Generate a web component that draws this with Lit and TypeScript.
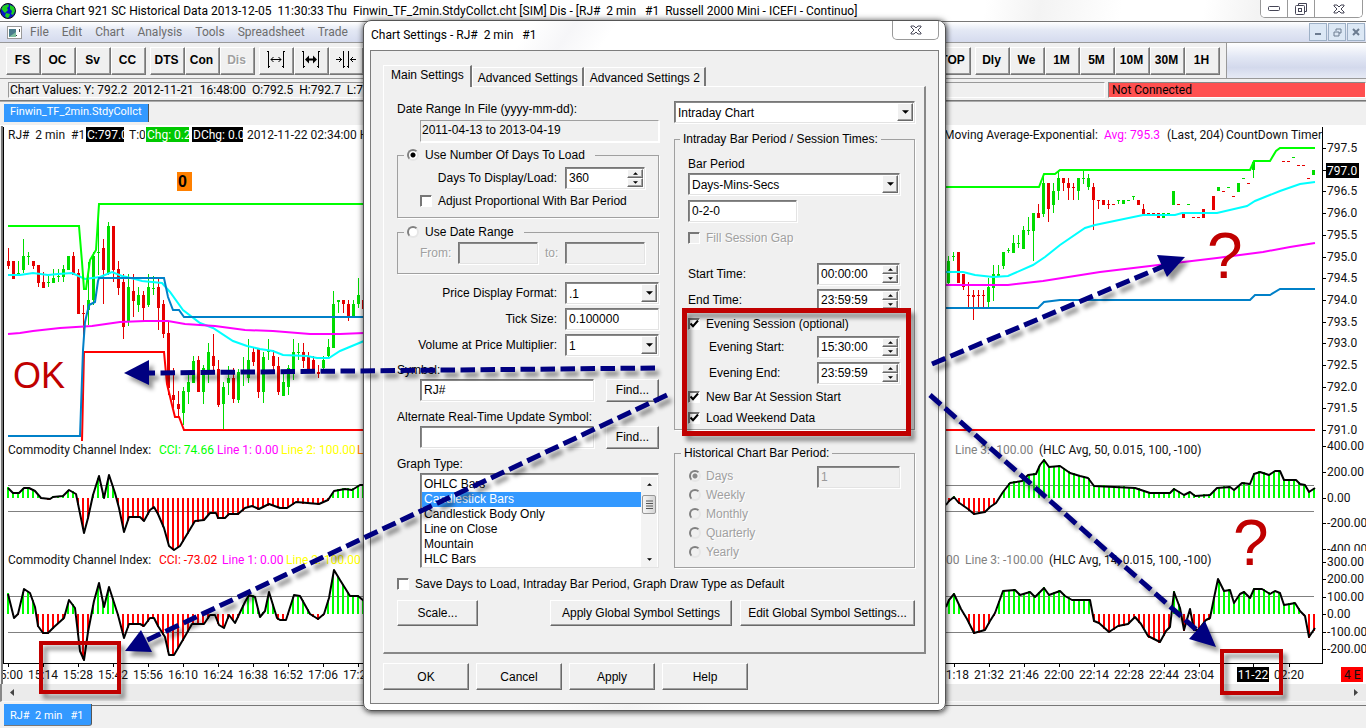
import { LitElement, html, svg, css, nothing } from "lit";
import { customElement, property } from "lit/decorators.js";
import { classMap } from "lit/directives/class-map.js";

type Point = [number, number];
// x, high, low, body top, body bottom, colour code
type Candle = [number, number, number, number, number, "g" | "r"];

const leftCandles: Candle[] = [
  [8, 248, 269, 261, 266, "r"], [13, 261, 279, 261, 279, "r"], [18, 261, 275, 273, 275, "g"],
  [23, 239, 273, 256, 270, "g"], [28, 252, 265, 256, 257, "g"], [33, 261, 269, 261, 266, "r"],
  [38, 265, 287, 265, 283, "r"], [43, 272, 288, 282, 288, "r"], [48, 276, 287, 282, 283, "g"],
  [53, 269, 283, 278, 283, "g"], [58, 269, 282, 276, 277, "g"], [63, 265, 282, 269, 277, "g"],
  [68, 256, 270, 256, 270, "g"], [73, 252, 275, 256, 275, "r"], [78, 269, 314, 273, 314, "r"],
  [83, 305, 400, 313, 314, "r"], [88, 262, 325, 300, 310, "g"], [93, 252, 305, 256, 300, "g"],
  [98, 204, 275, 252, 253, "g"], [103, 239, 304, 248, 270, "r"], [108, 222, 275, 226, 273, "g"],
  [113, 226, 282, 226, 270, "r"], [118, 261, 295, 269, 288, "r"], [123, 274, 339, 282, 327, "r"],
  [128, 274, 326, 287, 322, "g"], [133, 274, 317, 291, 301, "r"], [138, 287, 312, 295, 305, "g"],
  [143, 291, 321, 295, 308, "r"], [148, 274, 307, 287, 305, "g"], [153, 276, 295, 288, 289, "g"],
  [158, 278, 330, 287, 308, "r"], [163, 300, 338, 304, 334, "r"], [168, 322, 395, 333, 388, "r"],
  [173, 368, 408, 395, 400, "r"], [178, 391, 416, 404, 409, "r"], [183, 387, 425, 391, 413, "g"],
  [188, 373, 404, 382, 392, "g"], [193, 356, 383, 361, 383, "g"], [198, 356, 392, 360, 392, "r"],
  [203, 365, 404, 368, 392, "g"], [208, 343, 383, 352, 374, "g"], [213, 334, 373, 356, 366, "r"],
  [218, 360, 407, 369, 405, "r"], [223, 382, 429, 387, 404, "g"], [228, 366, 395, 378, 383, "g"],
  [233, 368, 403, 378, 399, "r"], [238, 369, 403, 372, 400, "g"], [243, 357, 386, 370, 374, "g"],
  [248, 339, 383, 360, 378, "g"], [253, 347, 366, 352, 362, "r"], [258, 348, 398, 349, 392, "r"],
  [263, 352, 403, 357, 392, "g"], [268, 339, 360, 351, 352, "g"], [273, 350, 370, 356, 366, "r"],
  [278, 357, 395, 366, 392, "r"], [283, 373, 396, 382, 396, "g"], [288, 365, 395, 368, 387, "g"],
  [293, 339, 380, 352, 373, "g"], [298, 343, 360, 352, 353, "g"], [303, 343, 368, 352, 361, "r"],
  [308, 352, 371, 356, 370, "r"], [313, 356, 373, 360, 370, "r"], [318, 365, 378, 372, 374, "r"],
  [323, 356, 373, 360, 368, "g"], [328, 339, 357, 347, 356, "g"], [333, 291, 348, 304, 348, "g"],
  [338, 300, 313, 300, 302, "g"], [343, 300, 313, 300, 304, "r"], [348, 300, 321, 304, 317, "r"],
  [353, 300, 317, 304, 316, "g"], [358, 278, 308, 295, 304, "g"], [363, 300, 309, 300, 309, "r"],
];

const rightCandles: Candle[] = [
  [948, 256, 284, 261, 283, "g"], [953, 252, 261, 256, 257, "g"], [958, 252, 283, 252, 283, "r"],
  [963, 274, 290, 274, 287, "r"], [968, 282, 308, 295, 296, "r"], [973, 290, 320, 295, 297, "r"],
  [978, 290, 308, 295, 296, "r"], [983, 290, 307, 295, 296, "r"], [988, 278, 307, 287, 302, "g"],
  [993, 265, 301, 274, 288, "g"], [998, 265, 277, 274, 276, "g"], [1003, 252, 269, 252, 266, "g"],
  [1008, 248, 253, 250, 251, "g"], [1013, 235, 253, 243, 253, "g"], [1018, 235, 248, 243, 244, "g"],
  [1023, 226, 249, 230, 249, "g"], [1028, 217, 235, 230, 231, "g"], [1033, 213, 261, 213, 231, "g"],
  [1038, 204, 218, 213, 218, "r"], [1043, 174, 217, 183, 214, "g"], [1048, 183, 222, 183, 209, "r"],
  [1053, 183, 213, 191, 205, "g"], [1058, 170, 200, 178, 191, "g"], [1063, 178, 191, 178, 183, "r"],
  [1068, 178, 200, 183, 188, "r"], [1073, 183, 200, 187, 188, "r"], [1078, 178, 200, 178, 191, "g"],
  [1083, 170, 184, 178, 179, "g"], [1088, 174, 190, 178, 187, "g"], [1093, 183, 230, 187, 200, "r"],
  [1098, 200, 209, 200, 201, "r"], [1103, 200, 205, 200, 205, "r"], [1108, 200, 209, 204, 205, "r"],
  [1113, 204, 205, 204, 205, "r"], [1118, 200, 204, 200, 201, "g"], [1123, 200, 204, 200, 204, "g"],
  [1128, 200, 201, 200, 201, "g"], [1133, 196, 200, 196, 197, "g"], [1138, 200, 205, 200, 205, "r"],
  [1143, 204, 214, 209, 214, "r"], [1148, 213, 214, 213, 214, "r"], [1153, 213, 214, 213, 214, "r"],
  [1158, 213, 218, 213, 218, "r"], [1163, 213, 218, 213, 218, "g"], [1168, 213, 214, 213, 214, "g"],
  [1173, 191, 205, 191, 205, "g"], [1178, 204, 205, 204, 205, "r"], [1183, 213, 218, 213, 218, "r"],
  [1188, 204, 205, 204, 205, "g"], [1193, 217, 218, 217, 218, "r"], [1198, 217, 218, 217, 218, "r"],
  [1203, 209, 218, 209, 218, "r"], [1213, 196, 210, 196, 210, "r"], [1218, 187, 191, 187, 191, "g"],
  [1223, 191, 192, 191, 192, "r"], [1228, 187, 188, 187, 188, "g"], [1233, 196, 197, 196, 197, "r"],
  [1238, 183, 192, 183, 192, "g"], [1243, 178, 179, 178, 179, "g"], [1248, 183, 184, 183, 184, "r"],
  [1253, 161, 178, 162, 170, "g"], [1283, 161, 162, 161, 162, "r"], [1288, 161, 162, 161, 162, "r"],
  [1293, 157, 158, 157, 158, "g"], [1298, 165, 166, 165, 166, "r"], [1303, 165, 166, 165, 166, "r"],
  [1308, 178, 179, 178, 179, "r"], [1313, 170, 175, 170, 175, "g"],
];

const studyLines: { color: string; points: string }[] = [
  { color: "#00ffff", points: "8,275 20,275 33,273 48,275 58,274 72,273 85,279 100,277 112,272 122,276 135,279 142,281 162,283 170,292 183,310 200,323 213,328 233,341 247,346 260,349 273,351 283,355 307,356 317,358 329,358 340,351 364,341" },
  { color: "#00ffff", points: "945,272 963,272 975,275 993,277 1008,276 1033,265 1045,257 1060,245 1085,228 1095,225 1143,215 1175,215 1182,213 1217,213 1247,206 1255,201 1280,191 1300,184 1315,182" },
  { color: "#ff00ff", points: "8,334 20,333 33,331 60,328 92,326 120,322 145,321 168,321 185,324 215,326 245,330 273,331 310,334 340,334 364,333" },
  { color: "#ff00ff", points: "945,285 1008,285 1043,281 1100,272 1150,266 1217,258 1240,255 1263,252 1290,247 1315,243" },
  { color: "#00ff00", points: "8,226 79,226 82,262 84,289 86,289 90,260 96,250 99,204 364,204" },
  { color: "#00ff00", points: "945,187 1039,187 1044,174 1055,174 1060,170 1250,170 1254,161 1270,161 1276,151 1280,148 1315,148" },
  { color: "#ff0000", points: "82,441 84,352 164,352 167,384 172,405 175,417 179,417 184,430 364,430" },
  { color: "#ff0000", points: "945,430 1315,430" },
  { color: "#0080c8", points: "8,436 80,436 83,350 85,322 89,305 95,302 98,281 99,278 164,278 168,297 173,310 179,310 184,317 364,317" },
  { color: "#0080c8", points: "945,308 1038,308 1044,302 1060,300 1250,300 1255,295 1270,295 1280,289 1315,289" },
];

const cciSlow: Point[][] = [
  [[8, 488], [13, 493], [19, 493], [24, 488], [29, 488], [35, 491], [41, 498], [50, 499], [53, 497], [63, 496], [69, 490], [76, 494], [84, 533], [88, 518], [93, 495], [99, 476], [104, 498], [109, 475], [115, 493], [119, 508], [124, 532], [129, 517], [140, 517], [144, 521], [150, 510], [154, 507], [158, 514], [164, 528], [169, 546], [174, 550], [180, 546], [186, 536], [195, 521], [204, 520], [210, 513], [216, 513], [218, 518], [225, 518], [229, 514], [238, 514], [245, 508], [252, 506], [259, 509], [269, 504], [280, 508], [287, 508], [296, 502], [319, 504], [328, 500], [334, 491], [345, 489], [352, 490], [360, 485], [364, 485]],
  [[946, 505], [949, 501], [954, 497], [958, 502], [968, 509], [974, 514], [985, 512], [990, 507], [996, 503], [1003, 492], [1010, 483], [1022, 481], [1028, 475], [1036, 474], [1040, 465], [1044, 460], [1049, 467], [1060, 466], [1070, 473], [1080, 476], [1088, 478], [1094, 486], [1135, 488], [1150, 493], [1170, 493], [1174, 489], [1184, 495], [1190, 492], [1195, 496], [1210, 495], [1217, 488], [1230, 487], [1234, 490], [1242, 483], [1250, 484], [1254, 474], [1260, 472], [1269, 475], [1275, 471], [1280, 471], [1284, 480], [1296, 480], [1300, 484], [1305, 485], [1309, 492], [1315, 488]],
];

const cciFast: Point[][] = [
  [[8, 594], [14, 618], [18, 614], [24, 589], [30, 593], [35, 607], [38, 626], [43, 633], [48, 633], [54, 627], [64, 618], [69, 600], [75, 608], [80, 651], [84, 660], [88, 632], [94, 601], [99, 583], [104, 607], [109, 587], [118, 615], [124, 638], [129, 624], [140, 624], [144, 626], [150, 618], [154, 618], [158, 626], [165, 637], [169, 655], [174, 655], [184, 638], [192, 624], [204, 624], [210, 615], [215, 615], [219, 625], [224, 628], [229, 615], [235, 623], [245, 602], [249, 595], [255, 597], [260, 617], [265, 611], [269, 592], [277, 618], [280, 620], [286, 620], [294, 595], [300, 596], [310, 614], [318, 619], [324, 614], [329, 598], [334, 570], [340, 580], [350, 596], [358, 596], [364, 601]],
  [[946, 607], [949, 600], [954, 594], [961, 609], [967, 619], [974, 633], [985, 630], [990, 621], [995, 613], [1003, 591], [1015, 590], [1020, 595], [1030, 592], [1035, 597], [1040, 592], [1044, 588], [1049, 595], [1060, 591], [1065, 596], [1072, 600], [1090, 600], [1094, 621], [1099, 623], [1109, 632], [1118, 626], [1128, 624], [1135, 617], [1141, 624], [1148, 636], [1160, 642], [1166, 631], [1170, 627], [1174, 592], [1180, 608], [1184, 630], [1190, 609], [1194, 630], [1198, 630], [1206, 620], [1210, 618], [1214, 598], [1218, 579], [1224, 591], [1230, 590], [1234, 603], [1240, 594], [1244, 592], [1250, 598], [1254, 589], [1262, 589], [1270, 594], [1275, 591], [1280, 593], [1284, 605], [1290, 604], [1295, 603], [1300, 611], [1305, 616], [1309, 637], [1315, 628]],
];

const priceLabels = Array.from({ length: 14 }, (_, i) => ({
  y: Math.round(148 + i * 21.7),
  text: (797.5 - i * 0.5).toFixed(1),
}));

const cciLabels = [
  { y: 446, text: "400.00" }, { y: 472, text: "200.00" }, { y: 498, text: "0.00" },
  { y: 523, text: "-200.00" }, { y: 549, text: "-400.00" }, { y: 562, text: "300.00" },
  { y: 579, text: "200.00" }, { y: 597, text: "100.00" }, { y: 614, text: "0.00" },
  { y: 632, text: "-100.00" }, { y: 649, text: "-200.00" },
];

const timeLabels = [
  ...["15:00", "15:14", "15:28", "15:42", "15:56", "16:10", "16:24", "16:38", "16:52", "17:06", "17:20"].map(
    (text, i) => ({ x: 8 + i * 35, text })
  ),
  ...["21:18", "21:32", "21:46", "22:00", "22:14", "22:28", "22:44", "23:04"].map((text, i) => ({
    x: 954 + i * 35,
    text,
  })),
  { x: 1289, text: "02:20" },
];

function valueAt(points: Point[], x: number): number {
  for (let i = 1; i < points.length; i++) {
    const [x0, y0] = points[i - 1];
    const [x1, y1] = points[i];
    if (x <= x1) return y0 + ((y1 - y0) * (x - x0)) / (x1 - x0);
  }
  return points[points.length - 1][1];
}

@customElement("price-chart")
export class PriceChart extends LitElement {
  static styles = css`
    :host { display: block; background: #fff; }
    .canvas { display: block; width: 100%; height: auto; }
    .label { font: 12px Roboto, "Noto Sans", sans-serif; fill: #111; white-space: pre; }
    .inverse { fill: #fff; }
    .middle { text-anchor: middle; }
    .marker { font: bold 16px "Liberation Sans", Arial, sans-serif; fill: #000; }
    .crisp { shape-rendering: crispEdges; }
  `;

  private text(x: number, y: number, text: string, fill = "#111") {
    return svg`<text class="label" x=${x} y=${y} style=${`fill:${fill}`}>${text}</text>`;
  }

  private clipped(x: number, width: number, text: string, background: string, fill: string) {
    return svg`<svg x=${x} y="127" width=${width} height="15" overflow="hidden">
      <rect width=${width} height="15" fill=${background}></rect>
      <text class="label" x="1" y="12" style=${`fill:${fill}`}>${text}</text>
    </svg>`;
  }

  private candles(items: Candle[]) {
    return items.map(([x, high, low, top, bottom, kind]) => {
      const fill = kind === "g" ? "#00dc00" : "#e60000";
      return svg`<rect x=${x} y=${high} width="1" height=${low - high} fill=${fill}></rect>
        <rect x=${x - 1} y=${top} width="3" height=${bottom - top} fill=${fill}></rect>`;
    });
  }

  private histogram(points: Point[], zero: number) {
    const bars = [];
    const first = points[0][0];
    const start = first < 100 ? 8 : 949;
    for (let x = start; x <= points[points.length - 1][0]; x += 5) {
      const y = Math.round(valueAt(points, x));
      const up = y < zero;
      bars.push(svg`<rect x=${x - 1} y=${up ? y - 1 : zero} width="2"
        height=${Math.abs(zero - y) + 1} fill=${up ? "#00ff00" : "#ff0000"}></rect>`);
    }
    return svg`<g class="crisp">${bars}</g>
      <polyline points=${points.map((p) => p.join()).join(" ")} fill="none" stroke="#000"
        stroke-width="2" stroke-linejoin="round"></polyline>`;
  }

  render() {
    return html`<svg class="canvas" viewBox="0 126 1366 558" role="img" aria-label="Russell 2000 Mini chart">
      <g class="crisp">
        <rect x="0" y="126" width="1" height="558" fill="#f0f0f0"></rect>
        <rect x="1" y="126" width="2" height="558" fill="#777"></rect>
        <rect x="3" y="127" width="1" height="537" fill="#000"></rect>
        <rect x="1322" y="127" width="1" height="537" fill="#000"></rect>
        <rect x="3" y="663" width="1320" height="1" fill="#000"></rect>
        ${[485, 511, 596, 632].map((y) => svg`<rect x="8" y=${y} width="1306" height="1" fill="#808080"></rect>`)}
        ${[...priceLabels, ...cciLabels].map((l) => svg`<rect x="1323" y=${l.y} width="3" height="1" fill="#000"></rect>`)}
        ${[...timeLabels, { x: 1253 }].map((l) => svg`<rect x=${l.x} y="664" width="1" height="3" fill="#000"></rect>`)}
        ${this.candles(leftCandles)} ${this.candles(rightCandles)}
      </g>
      ${studyLines.map((l) => svg`<polyline points=${l.points} fill="none" stroke=${l.color} stroke-width="2"></polyline>`)}
      ${cciSlow.map((p) => this.histogram(p, 498))} ${cciFast.map((p) => this.histogram(p, 614))}

      ${this.text(8, 139, "RJ#  2 min  #1")}
      ${this.clipped(86, 38, "C:797.0", "#000", "#fff")}
      ${this.clipped(128, 17, "T:0", "#fff", "#111")}
      ${this.clipped(146, 43, "Chg: 0.2", "#00c800", "#fff")}
      ${this.clipped(192, 51, "DChg: 0.0", "#000", "#fff")}
      ${this.text(247, 139, "2012-11-22 02:34:00 H:")}
      ${this.text(944, 139, "Moving Average-Exponential:")}
      ${this.text(1104, 139, "Avg: 795.3", "#ff00ff")}
      ${this.text(1167, 139, "(Last, 204)")}
      ${this.clipped(1225, 97, "CountDown Timer", "#fff", "#111")}
      <rect x="177" y="172" width="15" height="19" fill="#ff8000"></rect>
      <text class="marker" x="178" y="187">0</text>

      ${this.text(8, 454, "Commodity Channel Index:")}
      ${this.text(159, 454, "CCI: 74.66", "#00ff00")}
      ${this.text(217, 454, "Line 1: 0.00", "#ff00ff")}
      ${this.text(281, 454, "Line 2: 100.00", "#ffff00")}
      ${this.text(357, 454, "L", "#ff8000")}
      ${this.text(955, 454, "Line 3: -100.00", "#808080")}
      ${this.text(1039, 454, "(HLC Avg, 50, 0.015, 100, -100)")}
      ${this.text(8, 564, "Commodity Channel Index:")}
      ${this.text(159, 564, "CCI: -73.02", "#ff0000")}
      ${this.text(222, 564, "Line 1: 0.00", "#ff00ff")}
      ${this.text(286, 564, "Line 2: 100.00", "#ffff00")}
      ${this.text(946, 564, "00", "#808080")}
      ${this.text(965, 564, "Line 3: -100.00", "#808080")}
      ${this.text(1049, 564, "(HLC Avg, 14, 0.015, 100, -100)")}

      ${[...priceLabels, ...cciLabels].map((l) =>
        l.text === "797.0"
          ? svg`<rect x="1326" y=${l.y - 7} width="33" height="15" fill="#000"></rect>
              <text class="label inverse" x="1327" y=${l.y + 5}>${l.text}</text>`
          : l.text === "-400.00"
            ? svg`<svg x="1327" y="541" width="39" height="10" overflow="hidden"><text class="label" x="0" y="12">${l.text}</text></svg>`
            : svg`<text class="label" x="1327" y=${l.y + 4}>${l.text}</text>`
      )}
      ${timeLabels.map((l) => svg`<text class="label middle" x=${l.x} y="679">${l.text}</text>`)}
      <rect x="0" y="668" width="1" height="16" fill="#f0f0f0"></rect>
      <rect x="1" y="668" width="2" height="16" fill="#777"></rect>
      <rect x="1237" y="667" width="32" height="15" fill="#000"></rect>
      <text class="label inverse middle" x="1253" y="679">11-22</text>
      <rect x="1341" y="667" width="22" height="15" fill="#ff0000"></rect>
      <text class="label" x="1344" y="679">4 E</text>
    </svg>`;
  }
}

@customElement("chart-settings")
export class ChartSettings extends LitElement {
  static styles = css`
    :host {
      display: block;
      box-sizing: border-box;
      font: 12px/16px "Liberation Sans", Arial, sans-serif;
      color: #000;
      border: 1px solid #555;
      border-radius: 8px;
      background: linear-gradient(125deg, #fff 0 16%, #f6f6f8 20%, #fff 24% 60%, #f4f4f4 70%, #fff 78%);
      box-shadow: 0 0 6px rgba(0, 0, 0, 0.55), 1px 2px 5px rgba(0, 0, 0, 0.4);
      padding: 0 6px 6px;
    }
    * { box-sizing: border-box; }
    button, input, select { font: inherit; color: inherit; margin: 0; border-radius: 0; }
    .titlebar { display: flex; justify-content: space-between; height: 29px; }
    .title { font: 12px/16px Roboto, "Noto Sans", sans-serif; margin: 0; padding: 6px 0 0 1px; white-space: pre; }
    .close {
      width: 47px; height: 19px; padding: 0; display: grid; place-items: center;
      border: 1px solid #999; border-top: 0; border-radius: 0 0 5px 5px; background: #fff;
    }
    .client { border: 1px solid #7d7d7d; background: #f0f0f0; padding: 14px 12px 13px; }
    .tabs { display: flex; align-items: flex-end; height: 21px; }
    .tab {
      height: 19px; padding: 1px 4px 0 5px; border: 1px solid #fff; border-bottom: 0;
      border-right: 2px solid #777; background: #f0f0f0; white-space: nowrap;
    }
    .tab.active { height: 22px; padding: 0 6px 3px 7px; position: relative; z-index: 1; margin-bottom: -1px; }
    .panel {
      border: 1px solid #fff; border-right: 2px solid #888; border-bottom: 2px solid #888;
      padding: 11px 9px 26px 13px; display: flex; flex-direction: column;
    }
    .columns { display: flex; justify-content: space-between; }
    .left { width: 262px; display: flex; flex-direction: column; }
    .right { width: 241px; display: flex; flex-direction: column; padding-top: 3px; }
    .caption { height: 16px; display: block; white-space: nowrap; }
    .first { height: 22px; padding-top: 3px; }
    .indent { margin-left: 23px; }
    .row { display: flex; align-items: center; height: 22px; }
    .end { justify-content: flex-end; gap: 8px; }
    .between { justify-content: space-between; }
    .group { border: 1px solid #a0a0a0; box-shadow: 1px 1px 0 #fff; margin: 0; padding: 0; min-width: 0; }
    .group > legend { height: 16px; margin-left: -8px; padding: 0 3px; white-space: nowrap; }
    .choice-legend { display: flex; gap: 6px; align-items: center; }
    .group > .choice-legend { margin-left: -16px; padding-right: 10px; }
    .load { margin-top: 5px; padding: 4px 13px 8px 22px; }
    .load .check { margin-top: 4px; }
    .range { margin-top: 6px; padding: 2px 13px 9px 22px; }
    .range .row { justify-content: space-between; }
    .formats { display: flex; flex-direction: column; gap: 4px; margin: 8px 0 6px; }
    .block { display: flex; flex-direction: column; gap: 1px; margin-bottom: 8px; }
    .block.last { margin-bottom: 0; }
    .muted { color: #a0a0a0; text-shadow: 1px 1px 0 #fff; }
    .field {
      height: 22px; width: 100%; padding: 0 3px; background: #fff;
      border: 1px solid; border-color: #777 #e3e3e3 #e3e3e3 #777;
      box-shadow: inset 1px 1px 0 #888, 1px 1px 0 #fff; outline: 0;
    }
    .field.flat { background: #f0f0f0; box-shadow: 1px 1px 0 #fff; border-color: #a0a0a0 #fff #fff #a0a0a0; padding: 0 1px 3px; }
    .field:disabled { background: #f0f0f0; color: #999; opacity: 1; }
    .w80 { width: 80px; }
    .w94 { width: 94px; }
    .w83 { width: 83px; }
    .w109 { width: 109px; }
    .w174 { width: 174px; }
    .raised {
      background: #f0f0f0; border: 1px solid; border-color: #fff #696969 #696969 #fff;
      box-shadow: inset -1px -1px 0 #a0a0a0; padding: 0; white-space: nowrap;
    }
    .find { width: 53px; height: 23px; }
    .combo, .spin { display: inline-grid; grid-template-columns: 1fr 18px; }
    .combo > *, .spin > * { grid-row: 1; }
    .combo select { grid-column: 1 / -1; appearance: none; padding: 2px 3px 0; }
    .combo .drop { grid-column: 2; margin: 2px 2px 2px 0; display: grid; place-items: center; pointer-events: none; }
    .spin .field { grid-column: 1 / -1; }
    .spin .steps { grid-column: 2; display: grid; margin: 2px 2px 2px 0; position: relative; }
    .spin .raised { display: grid; place-items: center; min-height: 0; height: 9px; }
    .check { display: flex; align-items: center; gap: 6px; height: 16px; white-space: nowrap; }
    .box {
      appearance: none; width: 12px; height: 12px; background: #fff; flex: none;
      border: 1px solid; border-color: #777 #fff #fff #777; box-shadow: inset 1px 1px 0 #777;
    }
    .box:disabled { background: #f0f0f0; }
    .box:checked {
      background: #fff url('data:image/svg+xml,<svg xmlns="http://www.w3.org/2000/svg" viewBox="0 0 10 10"><path d="M1.5 4.5L4 7.2L9 1.5" fill="none" stroke="black" stroke-width="2"/></svg>') center / 10px 10px no-repeat;
    }
    .dot {
      appearance: none; width: 12px; height: 12px; border-radius: 50%; background: #fff; flex: none;
      border: 2px solid; border-color: #808080 #e6e6e6 #e6e6e6 #808080;
    }
    .dot:checked { background: radial-gradient(circle, #000 0 2px, #fff 3px); }
    .dot:disabled { background: #f0f0f0; }
    .dot:disabled:checked { background: radial-gradient(circle, #888 0 2px, #f0f0f0 3px); }
    .listbox {
      display: grid; grid-template-columns: 1fr 16px; height: 95px; padding: 3px 1px 0 1px; background: #fff;
      border: 1px solid; border-color: #777 #e3e3e3 #e3e3e3 #777; box-shadow: inset 1px 1px 0 #888;
    }
    .listbox select { border: 0; outline: 0; background: #fff; padding: 0; overflow: hidden; height: 90px; min-width: 0; width: 100%; }
    .listbox option { height: 15px; min-height: 15px; line-height: 15px; padding: 0 2px; }
    .listbox option:checked { background: #3399ff linear-gradient(#3399ff, #3399ff); color: #fff; }
    .scroll { display: flex; flex-direction: column; align-items: center; justify-content: space-between; background: #f3f3f3; height: 90px; padding: 6px 0; }
    .thumb {
      width: 14px; height: 19px; border: 1px solid #979797; border-radius: 2px; margin: 9px 0 auto;
      background: linear-gradient(90deg, #f6f6f6, #d4d4d4); display: grid; place-items: center;
    }
    .sessions { margin-top: 8px; height: 299px; padding: 9px 14px 0 13px; display: flex; flex-direction: column; }
    .sessions .combo { margin-top: 1px; }
    .sessions .w109 { margin-top: 5px; }
    .gap8 { margin-top: 8px; }
    .gap17 { margin-top: 17px; }
    .gap4 { margin-top: 4px; }
    .gap5 { margin-top: 5px; }
    .inset { padding-left: 21px; }
    .history { margin-top: 15px; padding: 5px 14px 6px 14px; display: flex; justify-content: space-between; align-items: flex-start; }
    .periods { display: grid; grid-auto-rows: 19px; }
    .periods .check { height: 19px; gap: 5px; }
    .save { margin-top: 8px; }
    .actions { display: flex; gap: 8px; margin-top: 8px; height: 26px; }
    .scale { width: 81px; margin-right: auto; }
    .apply-all { width: 182px; }
    .edit-all { width: 175px; }
    .footer { display: flex; gap: 7px; margin-top: 9px; height: 27px; }
    .footer .raised { width: 86px; }
  `;

  private arrow(up = false, size = 5) {
    return html`<svg width=${size} height=${size > 5 ? 4 : 3} viewBox="0 0 6 3" aria-hidden="true">
      <path d=${up ? "M0 3L3 0L6 3Z" : "M0 0L3 3L6 0Z"} fill="#000"></path>
    </svg>`;
  }

  private combo(id: string, value: string, cls = "", label = "") {
    return html`<span class="combo ${cls}">
      <select id=${id} class="field" aria-label=${label || nothing}><option>${value}</option></select>
      <span class="raised drop">${this.arrow(false, 7)}</span>
    </span>`;
  }

  private spin(id: string, value: string, cls: string) {
    return html`<span class="spin ${cls}">
      <input id=${id} class="field" .value=${value} />
      <span class="steps">
        <button class="raised" aria-label="Increase">${this.arrow(true)}</button>
        <button class="raised" aria-label="Decrease">${this.arrow()}</button>
      </span>
    </span>`;
  }

  private check(text: string, checked: boolean, cls = "", disabled = false) {
    return html`<label class="check ${cls} ${disabled ? "muted" : ""}">
      <input type="checkbox" class="box" .checked=${checked} ?disabled=${disabled} />${text}
    </label>`;
  }

  private time(id: string, label: string, value: string, cls: string) {
    return html`<div class="row between ${cls}">
      <label for=${id}>${label}</label>${this.spin(id, value, "w83")}
    </div>`;
  }

  render() {
    const types = ["OHLC Bars", "Candlestick Bars", "Candlestick Body Only", "Line on Close", "Mountain", "HLC Bars"];
    return html`
      <header class="titlebar">
        <h1 class="title">Chart Settings - RJ#  2 min   #1</h1>
        <button class="close" aria-label="Close">
          <svg width="12" height="10" viewBox="0 0 12 10">
            <path d="M1 1h3l2 2 2-2h3v1L8 5l3 3v1H8L6 7 4 9H1V8l3-3-3-3z" fill="#fff" stroke="#4a4a5a" stroke-width="1"></path>
          </svg>
        </button>
      </header>
      <div class="client">
        <div class="tabs" role="tablist">
          ${["Main Settings", "Advanced Settings", "Advanced Settings 2"].map(
            (t, i) => html`<button role="tab" aria-selected=${i === 0} class=${classMap({ tab: true, active: i === 0 })}>${t}</button>`
          )}
        </div>
        <section class="panel">
          <div class="columns">
            <div class="left">
              <label class="caption first" for="file-range">Date Range In File (yyyy-mm-dd):</label>
              <div class="indent row"><input id="file-range" class="field flat" readonly .value=${"2011-04-13 to 2013-04-19"} /></div>
              <fieldset class="group load">
                <legend class="choice-legend">
                  <input type="radio" name="load" class="dot" id="by-days" .checked=${true} />
                  <label for="by-days">Use Number Of Days To Load</label>
                </legend>
                <div class="row end"><label for="days">Days To Display/Load:</label>${this.spin("days", "360", "w80")}</div>
                ${this.check("Adjust Proportional With Bar Period", false)}
              </fieldset>
              <fieldset class="group range">
                <legend class="choice-legend">
                  <input type="radio" name="load" class="dot" id="by-range" />
                  <label for="by-range">Use Date Range</label>
                </legend>
                <div class="row">
                  <label class="muted" for="from">From:</label><input id="from" class="field w80" disabled />
                  <label class="muted" for="to">to:</label><input id="to" class="field w80" disabled />
                </div>
              </fieldset>
              <div class="formats">
                <div class="row end"><label for="format">Price Display Format:</label>${this.combo("format", ".1", "w94")}</div>
                <div class="row end"><label for="tick">Tick Size:</label><input id="tick" class="field w94" .value=${"0.100000"} /></div>
                <div class="row end"><label for="mult">Volume at Price Multiplier:</label>${this.combo("mult", "1", "w94")}</div>
              </div>
              <div class="block">
                <label class="caption" for="symbol">Symbol:</label>
                <div class="row between indent">
                  <input id="symbol" class="field w174" .value=${"RJ#"} /><button class="raised find">Find...</button>
                </div>
              </div>
              <div class="block">
                <label class="caption" for="alternate">Alternate Real-Time Update Symbol:</label>
                <div class="row between indent">
                  <input id="alternate" class="field w174" /><button class="raised find">Find...</button>
                </div>
              </div>
              <div class="block last">
                <label class="caption" for="graph">Graph Type:</label>
                <div class="listbox indent">
                  <select id="graph" size="6">
                    ${types.map((t, i) => html`<option ?selected=${i === 1}>${t}</option>`)}
                  </select>
                  <span class="scroll">
                    ${this.arrow(true)}
                    <span class="thumb"><svg width="7" height="9" viewBox="0 0 7 9"><path d="M0 1h7M0 3.500h7M0 6h7M0 8.500h7" stroke="#555"></path></svg></span>
                    ${this.arrow()}
                  </span>
                </div>
              </div>
            </div>
            <div class="right">
              ${this.combo("chart-type", "Intraday Chart", "", "Chart type")}
              <fieldset class="group sessions">
                <legend>Intraday Bar Period / Session Times:</legend>
                <label class="caption" for="bar-period">Bar Period</label>
                ${this.combo("bar-period", "Days-Mins-Secs")}
                <input class="field w109" aria-label="Period length" .value=${"0-2-0"} />
                ${this.check("Fill Session Gap", false, "gap8", true)}
                ${this.time("start", "Start Time:", "00:00:00", "gap17")}
                ${this.time("end", "End Time:", "23:59:59", "gap4")}
                ${this.check("Evening Session (optional)", true, "gap5")}
                ${this.time("evening-start", "Evening Start:", "15:30:00", "gap4 inset")}
                ${this.time("evening-end", "Evening End:", "23:59:59", "gap4 inset")}
                ${this.check("New Bar At Session Start", true, "gap5")}
                ${this.check("Load Weekend Data", true, "gap5")}
              </fieldset>
              <fieldset class="group history">
                <legend>Historical Chart Bar Period:</legend>
                <div class="periods">
                  ${["Days", "Weekly", "Monthly", "Quarterly", "Yearly"].map(
                    (t, i) => html`<label class="check muted">
                      <input type="radio" name="history" class="dot" disabled .checked=${i === 0} />${t}
                    </label>`
                  )}
                </div>
                <input class="field w83" aria-label="Number of periods" disabled .value=${"1"} />
              </fieldset>
            </div>
          </div>
          ${this.check("Save Days to Load, Intraday Bar Period, Graph Draw Type as Default", false, "save")}
          <div class="actions">
            <button class="raised scale">Scale...</button>
            <button class="raised apply-all">Apply Global Symbol Settings</button>
            <button class="raised edit-all">Edit Global Symbol Settings...</button>
          </div>
        </section>
        <footer class="footer">
          ${["OK", "Cancel", "Apply", "Help"].map((t) => html`<button class="raised">${t}</button>`)}
        </footer>
      </div>
    `;
  }
}

@customElement("callout-layer")
export class CalloutLayer extends LitElement {
  static styles = css`
    :host { display: block; pointer-events: none; }
    .layer { display: block; width: 100%; height: auto; }
    .shadow { filter: drop-shadow(4px 5px 2px rgba(0, 0, 0, 0.42)); }
    .note { font-family: "Liberation Sans", Arial, sans-serif; fill: #c00000; }
    .small { font-size: 36px; }
    .large { font-size: 64px; }
  `;

  @property({ attribute: false }) arrows = [
    { line: "M655 368L148 373", head: "124,373 149,360 149,385" },
    { line: "M667 395L143 642", head: "125,651 141,630 152,652" },
    { line: "M932 364L1164 266", head: "1185,257 1157,255 1167,277" },
    { line: "M930 395L1199 632", head: "1216,647 1205,621 1189,639" },
  ];

  @property({ attribute: false }) frames = [
    { x: 41, y: 643, width: 78, height: 49, stroke: 4 },
    { x: 684.5, y: 310.5, width: 224, height: 123, stroke: 5 },
    { x: 1222, y: 651, width: 59, height: 42, stroke: 4 },
  ];

  render() {
    return html`<svg class="layer" viewBox="0 0 1366 728" aria-hidden="true">
      ${this.arrows.map(
        (a) => svg`<g class="shadow">
          <path d=${a.line} stroke="#000080" stroke-width="5" stroke-dasharray="14.500 5.500" fill="none"></path>
          <polygon points=${a.head} fill="#000080"></polygon>
        </g>`
      )}
      ${this.frames.map(
        (f) => svg`<rect class="shadow" x=${f.x} y=${f.y} width=${f.width} height=${f.height}
          fill="none" stroke="#c00000" stroke-width=${f.stroke}></rect>`
      )}
      <text class="note small" x="13" y="388">OK</text>
      <text class="note large" x="1207" y="278">?</text>
      <text class="note large" x="1233" y="565">?</text>
    </svg>`;
  }
}

@customElement("app-root")
export class AppRoot extends LitElement {
  static styles = css`
    :host {
      display: flex; flex-direction: column; position: relative; min-height: 100vh; overflow: hidden;
      background: #f0f0f0; color: #000; font: 12px/16px Roboto, "Noto Sans", sans-serif;
    }
    * { box-sizing: border-box; }
    button { font: inherit; color: inherit; margin: 0; padding: 0; border-radius: 0; }
    .titlebar { display: flex; height: 22px; background: linear-gradient(100deg, #fff 0 72%, #f3f3f3 76%, #fff 82% 88%, #f3f3f3 92%, #fff); border-bottom: 1px solid #777; }
    .title { margin: 0; padding: 3px 0 0 5px; font: inherit; white-space: pre; flex: 1; }
    .globe { flex: none; }
    .controls { display: flex; height: 18px; margin-right: 3px; border: 1px solid #999; border-top: 0; border-radius: 0 0 5px 5px; overflow: hidden; }
    .control { width: 27px; border: 0; border-right: 1px solid #999; background: #fff; display: grid; place-items: center; }
    .control.wide { width: 47px; border-right: 0; }
    .menubar { display: flex; align-items: center; height: 21px; padding: 0 1px 0 7px; color: #6d6d6d; background: linear-gradient(#fff, #e4e9f5 40%, #d5dbee); border-bottom: 1px solid #999; }
    .menu { display: flex; gap: 13px; margin: 0 auto 0 8px; }
    .menu button { border: 0; background: none; }
    .mdi { display: flex; gap: 1px; }
    .mdi button { width: 18px; height: 18px; border: 1px solid #9db0c6; background: #dce8f5; display: grid; place-items: center; }
    .toolbar { display: flex; height: 36px; padding: 4px 0 4px 6px; border-bottom: 1px solid #999; gap: 4px; background: #f0f0f0; }
    .cluster { display: flex; }
    .tool {
      width: 35px; height: 28px; background: #f0f0f0; border: 1px solid; border-color: #fff #777 #777 #fff;
      box-shadow: inset -1px -1px 0 #999; font: bold 12px/14px "Liberation Sans", Arial, sans-serif; padding: 0 2px 3px 0;
      display: grid; place-items: center; overflow: hidden;
    }
    .tool:disabled { color: #a0a0a0; text-shadow: 1px 1px 0 #fff; }
    .push { margin-left: auto; }
    .rest { width: 140px; margin: -4px 0; border-left: 1px solid #999; background: linear-gradient(#fff, #e2e7f4 40%, #d3d9ec 70%, #e6eaf5); margin-left: 2px; }
    .status { display: flex; height: 22px; padding: 3px 0 2px 8px; gap: 3px; border-bottom: 1px solid #777; }
    .values { flex: 1; border: 1px solid; border-color: #999 #fff #fff #999; padding-left: 1px; white-space: pre; line-height: 15px; overflow: hidden; }
    .offline { width: 258px; background: #ff5050; border: 1px solid; border-color: #888 #fff #fff #888; padding-left: 3px; line-height: 15px; }
    .tabrow { display: flex; height: 25px; padding: 2px 0 3px 4px; align-items: stretch; border-top: 1px solid #aaa; border-bottom: 1px solid #fff; }
    .doc { border: 0; border-right: 1px solid #555; background: #3399ff; color: #fff; padding: 0 6px 2px 6px; font-size: 11px; white-space: pre; }
    .hscroll { display: flex; align-items: center; justify-content: space-between; height: 18px; padding: 0 8px; background: #ebebeb; border-left: 2px solid #888; border-bottom: 1px solid #f8f8f8; }
    .bottom { flex: 1; min-height: 26px; display: flex; align-items: flex-start; padding-left: 4px; }
    .bottom .doc { height: 22px; padding: 2px 7px 0 6px; margin-top: 2px; border-bottom: 1px solid #777; border-radius: 0 0 3px 0; }
    .filler { flex: 1; margin-top: 3px; border-top: 1px solid #777; }
    .dialog { position: absolute; left: 363px; top: 20px; width: 583px; }
    .notes { position: absolute; inset: 0 0 auto 0; }
  `;

  private tool(text: string, disabled = false) {
    return html`<button class="tool" ?disabled=${disabled}>${text}</button>`;
  }

  private spacing(label: string, path: string, heads = "") {
    return html`<button class="tool" aria-label=${label}>
      <svg width="20" height="19" viewBox="0 0 20 19">
        <path d=${path} fill="none" stroke="#000"></path>
        <path d=${heads} fill="#000"></path>
      </svg>
    </button>`;
  }

  private triangle(left: boolean) {
    return html`<svg width="4" height="7" viewBox="0 0 4 7" aria-hidden="true"><path d=${left ? "M4 0V7L0 3.500Z" : "M0 0V7L4 3.500Z"} fill="#444"></path></svg>`;
  }

  render() {
    return html`
      <header class="titlebar">
        <svg class="globe" width="17" height="21" viewBox="0 0 17 21" aria-hidden="true">
          <circle cx="8" cy="11" r="7.500" fill="#0a14c8" stroke="#111"></circle>
          <path d="M3 6L8 4L9 6L7 8L8 10L5 13L3 11L1.500 9Z" fill="#1fd01f"></path>
          <path d="M10 5L14 7L15 11L13 15L11 14L12 11L10 9Z" fill="#1fd01f"></path>
          <path d="M6 13L10 14L9 17L7 18L5 16Z" fill="#1fd01f"></path>
        </svg>
        <h1 class="title">Sierra Chart 921 SC Historical Data 2013-12-05  11:30:33 Thu  Finwin_TF_2min.StdyCollct.cht [SIM] Dis - [RJ#  2 min   #1  Russell 2000 Mini - ICEFI - Continuo]</h1>
        <div class="controls">
          <button class="control" aria-label="Minimize"><svg width="12" height="5" viewBox="0 0 12 5"><rect x="0.500" y="0.500" width="11" height="4" rx="1" fill="#fff" stroke="#445"></rect></svg></button>
          <button class="control" aria-label="Restore"><svg width="12" height="12" viewBox="0 0 12 12"><path d="M3.500 2.500V0.500H11.500V8.500H9.500" fill="#fff" stroke="#445"></path><rect x="0.500" y="2.500" width="9" height="9" rx="1" fill="#fff" stroke="#445"></rect><rect x="3.500" y="5.500" width="3" height="3" fill="#fff" stroke="#445"></rect></svg></button>
          <button class="control wide" aria-label="Close"><svg width="12" height="10" viewBox="0 0 12 10"><path d="M1 1h3l2 2 2-2h3v1L8 5l3 3v1H8L6 7 4 9H1V8l3-3-3-3z" fill="#fff" stroke="#445"></path></svg></button>
        </div>
      </header>
      <nav class="menubar">
        <svg width="15" height="13" viewBox="0 0 15 13" aria-hidden="true">
          <rect x="0.500" y="0.500" width="14" height="12" fill="#fff" stroke="#999"></rect>
          <rect x="2" y="3" width="7" height="8" fill="#4a7c8c"></rect><path d="M2 11L9 6V11Z" fill="#7fbf9f"></path>
          <rect x="9" y="9" width="1" height="1" fill="#333"></rect><rect x="12" y="3" width="1" height="3" fill="#444"></rect>
        </svg>
        <div class="menu">
          ${["File", "Edit", "Chart", "Analysis", "Tools", "Spreadsheet", "Trade"].map((t) => html`<button>${t}</button>`)}
        </div>
        <div class="mdi">
          <button aria-label="Minimize chart"><svg width="8" height="8" viewBox="0 0 8 8"><rect x="1" y="5" width="6" height="2" fill="#6c7c90"></rect></svg></button>
          <button aria-label="Restore chart"><svg width="9" height="9" viewBox="0 0 9 9"><path d="M3 3V1H8V5H6M1 4H6V8H1Z" fill="none" stroke="#6c7c90" stroke-width="1"></path></svg></button>
          <button aria-label="Close chart"><svg width="8" height="8" viewBox="0 0 8 8"><path d="M1 1L7 7M7 1L1 7" stroke="#6c7c90" stroke-width="2"></path></svg></button>
        </div>
      </nav>
      <div class="toolbar" role="toolbar">
        <div class="cluster">${["FS", "OC", "Sv", "CC"].map((t) => this.tool(t))}</div>
        <div class="cluster">${this.tool("DTS")}${this.tool("Con")}${this.tool("Dis", true)}</div>
        <div class="cluster">
          ${this.spacing("Widen bar spacing", "M1 1.500h2M2.500 1V18M2 16.500h2M17.500 1V18M16 16.500h2M17 1.500h2M5 9.500H15M7.500 7L5 9.500L7.500 12M12.500 7L15 9.500L12.500 12")}
          ${this.spacing("Maximum bar spacing", "M1 1.500h2M2.500 1V18M2 16.500h2M17.500 1V18M16 16.500h2M17 1.500h2", "M4 9.500L8 5.500V8.500H12V5.500L16 9.500L12 13.500V10.500H8V13.500Z")}
          ${this.spacing("Narrow bar spacing", "M7.500 1V18M7 16.500h2M12.500 1V18M11 16.500h2M0 9.500H6M3 7L5.500 9.500L3 12M20 9.500H14M17 7L14.500 9.500L17 12")}
        </div>
        <div class="cluster push">${this.tool("TOP")}</div>
        <div class="cluster">${["Dly", "We", "1M", "5M", "10M", "30M", "1H"].map((t) => this.tool(t))}</div>
        <div class="rest"></div>
      </div>
      <div class="status">
        <div class="values">Chart Values: Y: 792.2  2012-11-21  16:48:00  O:792.5  H:792.7  L:791.8</div>
        <div class="offline">Not Connected</div>
      </div>
      <div class="tabrow"><button class="doc">Finwin_TF_2min.StdyCollct</button></div>
      <price-chart></price-chart>
      <div class="hscroll">${this.triangle(true)}${this.triangle(false)}</div>
      <div class="bottom"><button class="doc">RJ#  2 min   #1</button><div class="filler"></div></div>
      <chart-settings class="dialog" role="dialog" aria-label="Chart Settings"></chart-settings>
      <callout-layer class="notes"></callout-layer>
    `;
  }
}
